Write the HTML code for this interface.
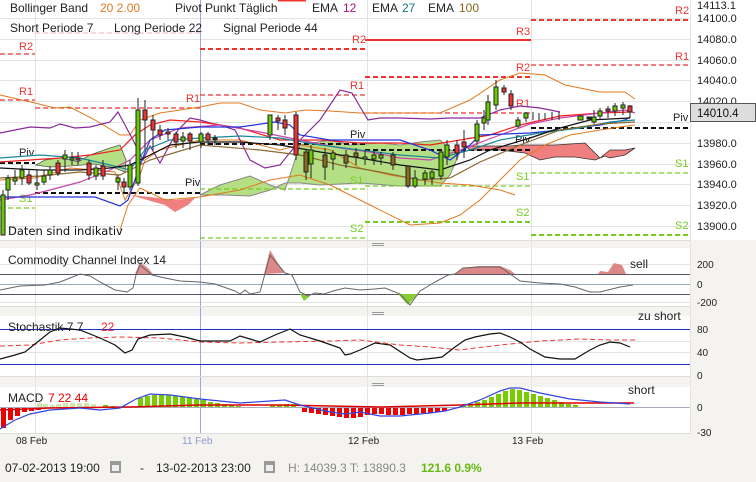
<!DOCTYPE html>
<html><head><meta charset="utf-8"><style>
html,body{margin:0;padding:0;background:#f4f3f0;width:756px;height:482px;overflow:hidden}
svg{display:block;font-family:"Liberation Sans",sans-serif}
</style></head><body>
<svg width="756" height="482" viewBox="0 0 756 482" xmlns="http://www.w3.org/2000/svg">
<rect x="0" y="0" width="756" height="482" fill="#f4f3f0"/>
<rect x="0" y="0" width="690" height="240" fill="#fff"/>
<rect x="0" y="248" width="690" height="58" fill="#fff"/>
<rect x="0" y="316" width="690" height="60" fill="#fff"/>
<rect x="0" y="387" width="690" height="46" fill="#fff"/>
<rect x="690" y="0" width="66" height="240" fill="#fff"/>
<g stroke="#e4e4e4" stroke-width="1">
<line x1="0" y1="18.5" x2="690" y2="18.5"/><line x1="0" y1="39.5" x2="690" y2="39.5"/><line x1="0" y1="60.5" x2="690" y2="60.5"/><line x1="0" y1="80.5" x2="690" y2="80.5"/><line x1="0" y1="101.5" x2="690" y2="101.5"/><line x1="0" y1="122.5" x2="690" y2="122.5"/><line x1="0" y1="143.5" x2="690" y2="143.5"/><line x1="0" y1="164.5" x2="690" y2="164.5"/><line x1="0" y1="184.5" x2="690" y2="184.5"/><line x1="0" y1="205.5" x2="690" y2="205.5"/><line x1="0" y1="226.5" x2="690" y2="226.5"/>
<line x1="35.5" y1="0" x2="35.5" y2="433"/><line x1="367.5" y1="0" x2="367.5" y2="433"/><line x1="531.5" y1="0" x2="531.5" y2="433"/>
<line x1="0" y1="264.5" x2="690" y2="264.5"/><line x1="0" y1="302.5" x2="690" y2="302.5"/>
<line x1="0" y1="341.5" x2="690" y2="341.5"/><line x1="0" y1="352.5" x2="690" y2="352.5"/>
<line x1="690.5" y1="0" x2="690.5" y2="434"/>
</g>
<line x1="200.5" y1="0" x2="200.5" y2="433" stroke="#9aa8dc"/>
<g stroke="#ddd"><line x1="0" y1="240.5" x2="690" y2="240.5"/><line x1="0" y1="306.5" x2="690" y2="306.5"/><line x1="0" y1="376.5" x2="690" y2="376.5"/><line x1="0" y1="433.5" x2="690" y2="433.5"/></g>
<g stroke="#999"><line x1="372" y1="243.5" x2="384" y2="243.5"/><line x1="372" y1="245.5" x2="384" y2="245.5"/><line x1="372" y1="312.5" x2="384" y2="312.5"/><line x1="372" y1="314.5" x2="384" y2="314.5"/><line x1="372" y1="383.5" x2="384" y2="383.5"/><line x1="372" y1="385.5" x2="384" y2="385.5"/></g>

<!-- clouds -->
<path d="M36,165 L45,160 L60,158 L72,160 L78,162 L90,155 L110,148 L120,145 L126,160 L125,172 L115,168 L95,164 L70,166 L50,167 Z" fill="#b5df85" stroke="#555" stroke-width="0.8"/>
<path d="M130,195 L150,197 L175,200 L195,198 L188,205 L175,212 L165,205 Z" fill="#f08080"/>
<path d="M200,195 L220,185 L250,176 L270,185 L285,190 L295,160 L300,145 L330,140 L350,145 L380,143 L400,145 L420,142 L440,140 L450,150 L460,152 L450,175 L440,186 L400,186 L360,183 L320,185 L300,183 L285,183 L270,190 L250,196 L225,195 Z" fill="#b5df85" stroke="#888" stroke-width="1"/>
<path d="M465,146 L510,146 L520,145 L555,145 L585,143 L600,158 L610,150 L625,150 L635,148 L625,155 L610,158 L605,156 L595,160 L575,157 L555,157 L540,160 L525,153 L500,150 L470,150 Z" fill="#f08080" stroke="#333" stroke-width="0.8"/>

<g fill="none" stroke-dasharray="5,3" stroke-width="1.3">
<line x1="0" y1="54" x2="35" y2="54" stroke="#e33"/>
<line x1="35" y1="33" x2="200" y2="33" stroke="#f4c0c0"/>
<line x1="0" y1="100" x2="35" y2="100" stroke="#e33"/>
<line x1="35" y1="108" x2="200" y2="108" stroke="#e33"/>
<line x1="0" y1="163" x2="35" y2="163" stroke="#111" stroke-width="2"/>
<line x1="35" y1="193" x2="200" y2="193" stroke="#111" stroke-width="2"/>
<line x1="0" y1="208" x2="35" y2="208" stroke="#7c2"/>
<line x1="200" y1="49" x2="365" y2="49" stroke="#e33" stroke-width="2"/>
<line x1="200" y1="95" x2="365" y2="95" stroke="#e33"/>
<line x1="200" y1="144" x2="365" y2="144" stroke="#111" stroke-width="2"/>
<line x1="200" y1="189" x2="365" y2="189" stroke="#7c2"/>
<line x1="200" y1="238" x2="365" y2="238" stroke="#7c2"/>
<line x1="365" y1="77" x2="531" y2="77" stroke="#e33" stroke-width="2"/>
<line x1="365" y1="113" x2="531" y2="113" stroke="#e33"/>
<line x1="365" y1="150" x2="531" y2="150" stroke="#111" stroke-width="2"/>
<line x1="365" y1="186" x2="531" y2="186" stroke="#7c2"/>
<line x1="365" y1="222" x2="531" y2="222" stroke="#7c2" stroke-width="2"/>
<line x1="531" y1="20" x2="690" y2="20" stroke="#e33" stroke-width="2"/>
<line x1="531" y1="65" x2="690" y2="65" stroke="#e33"/>
<line x1="531" y1="128" x2="690" y2="128" stroke="#111" stroke-width="2"/>
<line x1="531" y1="173" x2="690" y2="173" stroke="#7c2"/>
<line x1="531" y1="235" x2="690" y2="235" stroke="#7c2" stroke-width="2"/>
</g>
<line x1="365" y1="40" x2="531" y2="40" stroke="#e33" stroke-width="2"/>
<g font-size="11" fill="#e33">
<text x="19" y="50">R2</text><text x="19" y="95">R1</text>
<text x="186" y="102">R1</text>
<text x="352" y="43">R2</text><text x="350" y="89">R1</text>
<text x="516" y="35">R3</text><text x="516" y="71">R2</text><text x="516" y="107">R1</text>
<text x="675" y="14">R2</text><text x="675" y="60">R1</text>
</g>
<g font-size="11" fill="#7c2">
<text x="19" y="202">S1</text><text x="350" y="184">S1</text><text x="350" y="232">S2</text>
<text x="516" y="180">S1</text><text x="516" y="216">S2</text>
<text x="675" y="167">S1</text><text x="675" y="229">S2</text>
</g>
<g font-size="11" fill="#222">
<text x="19" y="156">Piv</text><text x="185" y="186">Piv</text><text x="350" y="138">Piv</text><text x="515" y="143">Piv</text><text x="673" y="121">Piv</text>
</g>

<g fill="none" stroke="#e07a20" stroke-width="1">
<path d="M0,95 L35,103 L55,108 L70,107 L95,120 L120,135 L130,135 L140,120 L160,113 L180,110 L200,107 L220,103 L240,103 L260,110 L285,113 L305,110 L330,111 L360,113 L400,113 L440,113 L470,100 L500,80 L520,73 L545,75 L565,85 L600,92 L625,92 L635,99"/>
<path d="M0,180 L35,178 L70,168 L95,170 L115,172 L125,200 L140,175 L145,160 L160,150 L200,140 L240,140 L280,150 L300,145 L330,150 L360,168 L390,175 L420,180 L440,183 L470,185 L500,190 L515,195"/>
<path d="M120,230 L128,205 L140,188 L165,200 L200,197 L240,190 L270,180 L300,175 L330,185 L370,205 L410,225 L440,223 L460,215 L480,200 L500,180 L520,160 L545,145 L570,135 L600,130 L620,127 L635,125"/>
</g>
<path d="M0,133 L15,130 L30,127 L50,128 L60,124 L75,128 L90,127 L110,122 L118,112 L125,125 L133,140 L143,160 L150,146 L160,163 L168,148 L178,130 L190,118 L200,120 L210,123 L220,125 L235,130 L250,160 L265,168 L280,165 L300,140 L320,120 L340,90 L352,93 L362,110 L368,120 L380,118 L400,118 L430,119 L450,118 L470,118 L480,118 L500,110 L520,106 L540,108 L560,112" fill="none" stroke="#8a2a9a" stroke-width="1.2"/>
<g fill="none" stroke-width="1.2">
<path d="M0,162 L30,160 L60,158 L90,155 L120,150 L135,135 L150,125 L170,120 L200,122 L240,128 L280,140 L320,140 L360,143 L400,143 L430,145 L460,140 L490,135 L520,125 L560,116 L600,113 L630,112" stroke="#e22"/>
<path d="M0,200 L30,195 L50,190 L80,182 L110,170 L130,160 L150,140 L180,128 L220,125 L260,132 L300,140 L340,148 L370,152 L400,158 L430,160 L460,150 L500,135 L530,124 L560,118 L600,113 L625,110 L635,113" stroke="#cc44aa"/>
<path d="M0,197 L50,197 L95,197 L120,206 L128,200 L140,165 L150,140 L165,130 L200,127 L240,127 L275,122 L290,125 L300,135 L330,140 L400,140 L430,150 L450,160 L470,145 L480,135 L530,133 L560,130 L600,125 L625,120 L630,117" stroke="#2233dd"/>
<path d="M0,158 L40,155 L80,158 L110,165 L130,170 L145,150 L170,140 L200,138 L240,136 L280,138 L320,145 L360,150 L400,155 L440,158 L470,150 L500,140 L540,133 L580,128 L610,122 L635,120" stroke="#1a8a9a"/>
<path d="M0,168 L40,170 L80,170 L110,168 L130,165 L150,155 L170,145 L200,142 L240,142 L280,145 L320,152 L360,158 L400,165 L440,170 L470,160 L490,150 L530,138 L560,128 L590,120 L630,118" stroke="#111"/>
<path d="M0,178 L40,176 L80,172 L120,175 L150,160 L200,145 L260,150 L300,155 L340,165 L380,172 L420,180 L450,178 L480,162 L520,145 L560,130 L600,124 L635,122" stroke="#8a6a30"/>
</g>

<g stroke="#222" stroke-width="1">
<line x1="3" y1="190" x2="3" y2="235"/><rect x="1" y="195" width="4" height="40" fill="#6c0"/>
<line x1="8" y1="175" x2="8" y2="200"/><rect x="6" y="178" width="4" height="12" fill="#6c0"/>
<line x1="15" y1="170" x2="15" y2="185"/><rect x="13" y="178" width="4" height="3" fill="#6c0"/>
<line x1="22" y1="165" x2="22" y2="185"/><rect x="20" y="170" width="4" height="8" fill="#6c0"/>
<line x1="29" y1="170" x2="29" y2="185"/><rect x="27" y="175" width="4" height="8" fill="#e33"/>
<line x1="37" y1="170" x2="37" y2="190"/><rect x="35" y="183" width="4" height="2" fill="#6c0"/>
<line x1="44" y1="170" x2="44" y2="185"/><rect x="42" y="176" width="4" height="6" fill="#6c0"/>
<line x1="50" y1="166" x2="50" y2="180"/><rect x="48" y="170" width="4" height="5" fill="#6c0"/>
<line x1="58" y1="160" x2="58" y2="176"/><rect x="56" y="163" width="4" height="10" fill="#e33"/>
<line x1="65" y1="150" x2="65" y2="172"/><rect x="63" y="155" width="4" height="4" fill="#6c0"/>
<line x1="72" y1="152" x2="72" y2="165"/><rect x="70" y="158" width="4" height="2" fill="#6c0"/>
<line x1="78" y1="152" x2="78" y2="165"/><rect x="76" y="158" width="4" height="2" fill="#e33"/>
<line x1="89" y1="160" x2="89" y2="180"/><rect x="87" y="163" width="4" height="12" fill="#e33"/>
<line x1="96" y1="165" x2="96" y2="180"/><rect x="94" y="168" width="4" height="8" fill="#6c0"/>
<line x1="103" y1="160" x2="103" y2="180"/><rect x="101" y="166" width="4" height="10" fill="#e33"/>
<line x1="118" y1="175" x2="118" y2="190"/><rect x="116" y="178" width="4" height="4" fill="#6c0"/>
<line x1="124" y1="178" x2="124" y2="192"/><rect x="122" y="182" width="4" height="5" fill="#e33"/>
<line x1="130" y1="160" x2="130" y2="190"/><rect x="128" y="165" width="4" height="22" fill="#6c0"/>
<line x1="138" y1="98" x2="138" y2="186"/><rect x="136" y="110" width="4" height="73" fill="#6c0"/>
<line x1="145" y1="100" x2="145" y2="150"/><rect x="143" y="110" width="4" height="10" fill="#e33"/>
<line x1="153" y1="115" x2="153" y2="150"/><rect x="151" y="120" width="4" height="10" fill="#e33"/>
<line x1="160" y1="125" x2="160" y2="140"/><rect x="158" y="130" width="4" height="5" fill="#e33"/>
<line x1="168" y1="128" x2="168" y2="140"/><rect x="166" y="132" width="4" height="2" fill="#e33"/>
<line x1="176" y1="132" x2="176" y2="148"/><rect x="174" y="134" width="4" height="8" fill="#e33"/>
<line x1="183" y1="132" x2="183" y2="148"/><rect x="181" y="137" width="4" height="4" fill="#6c0"/>
<line x1="190" y1="132" x2="190" y2="150"/><rect x="188" y="134" width="4" height="7" fill="#e33"/>
<line x1="201" y1="132" x2="201" y2="148"/><rect x="199" y="134" width="4" height="8" fill="#6c0"/>
<line x1="208" y1="132" x2="208" y2="145"/><rect x="206" y="134" width="4" height="6" fill="#e33"/>
<line x1="215" y1="135" x2="215" y2="145"/><rect x="213" y="138" width="4" height="2" fill="#222"/>
<line x1="270" y1="115" x2="270" y2="140"/><rect x="268" y="115" width="4" height="20" fill="#6c0"/>
<line x1="278" y1="115" x2="278" y2="130"/><rect x="276" y="118" width="4" height="3" fill="#e33"/>
<line x1="285" y1="115" x2="285" y2="135"/><rect x="283" y="120" width="4" height="8" fill="#e33"/>
<line x1="296" y1="112" x2="296" y2="160"/><rect x="294" y="115" width="4" height="40" fill="#e33"/>
<line x1="306" y1="150" x2="306" y2="180"/><rect x="304" y="152" width="4" height="20" fill="#8a6a20"/>
<line x1="311" y1="145" x2="311" y2="178"/><rect x="309" y="150" width="4" height="14" fill="#6c0"/>
<line x1="325" y1="148" x2="325" y2="180"/><rect x="323" y="155" width="4" height="12" fill="#8a6a20"/>
<line x1="333" y1="150" x2="333" y2="170"/><rect x="331" y="153" width="4" height="6" fill="#6c0"/>
<line x1="346" y1="150" x2="346" y2="168"/><rect x="344" y="155" width="4" height="8" fill="#8a6a20"/>
<line x1="356" y1="148" x2="356" y2="165"/><rect x="354" y="153" width="4" height="4" fill="#8a6a20"/>
<line x1="365" y1="150" x2="365" y2="165"/><rect x="363" y="157" width="4" height="2" fill="#6c0"/>
<line x1="374" y1="150" x2="374" y2="165"/><rect x="372" y="155" width="4" height="4" fill="#6c0"/>
<line x1="381" y1="152" x2="381" y2="165"/><rect x="379" y="155" width="4" height="3" fill="#6c0"/>
<line x1="393" y1="152" x2="393" y2="170"/><rect x="391" y="155" width="4" height="10" fill="#8a6a20"/>
<line x1="408" y1="165" x2="408" y2="188"/><rect x="406" y="166" width="4" height="20" fill="#8a6a20"/>
<line x1="415" y1="170" x2="415" y2="188"/><rect x="413" y="178" width="4" height="8" fill="#6c0"/>
<line x1="425" y1="170" x2="425" y2="185"/><rect x="423" y="173" width="4" height="6" fill="#6c0"/>
<line x1="432" y1="170" x2="432" y2="185"/><rect x="430" y="172" width="4" height="6" fill="#6c0"/>
<line x1="441" y1="150" x2="441" y2="180"/><rect x="439" y="152" width="4" height="24" fill="#6c0"/>
<line x1="447" y1="140" x2="447" y2="165"/><rect x="445" y="145" width="4" height="12" fill="#6c0"/>
<line x1="457" y1="140" x2="457" y2="160"/><rect x="455" y="145" width="4" height="8" fill="#e33"/>
<line x1="464" y1="130" x2="464" y2="158"/><rect x="462" y="142" width="4" height="5" fill="#e33"/>
<line x1="477" y1="120" x2="477" y2="145"/><rect x="475" y="124" width="4" height="17" fill="#6c0"/>
<line x1="484" y1="110" x2="484" y2="130"/><rect x="482" y="118" width="4" height="5" fill="#6c0"/>
<line x1="488" y1="95" x2="488" y2="125"/><rect x="486" y="102" width="4" height="18" fill="#6c0"/>
<line x1="496" y1="80" x2="496" y2="110"/><rect x="494" y="87" width="4" height="18" fill="#6c0"/>
<line x1="504" y1="85" x2="504" y2="95"/><rect x="502" y="88" width="4" height="4" fill="#e33"/>
<line x1="511" y1="90" x2="511" y2="110"/><rect x="509" y="94" width="4" height="12" fill="#e33"/>
<line x1="518" y1="117" x2="518" y2="128"/><rect x="516" y="120" width="4" height="6" fill="#6c0"/>
<line x1="526" y1="112" x2="526" y2="122"/><rect x="524" y="113" width="4" height="5" fill="#6c0"/>
<line x1="533" y1="112" x2="533" y2="120"/><line x1="539" y1="113" x2="539" y2="120"/><line x1="545" y1="113" x2="545" y2="120"/><line x1="552" y1="112" x2="552" y2="120"/><line x1="559" y1="112" x2="559" y2="120"/>
<rect x="578" y="116" width="5" height="4" fill="#6c0"/>
<rect x="587" y="117" width="4" height="2" fill="#222"/>
<line x1="594" y1="110" x2="594" y2="124"/><rect x="592" y="117" width="4" height="5" fill="#6c0"/>
<line x1="600" y1="108" x2="600" y2="120"/><rect x="598" y="111" width="4" height="5" fill="#6c0"/>
<line x1="608" y1="106" x2="608" y2="118"/><rect x="606" y="109" width="4" height="2" fill="#e33"/>
<line x1="615" y1="103" x2="615" y2="116"/><rect x="613" y="106" width="4" height="5" fill="#6c0"/>
<line x1="623" y1="102" x2="623" y2="115"/><rect x="621" y="105" width="4" height="3" fill="#6c0"/>
<line x1="630" y1="105" x2="630" y2="118"/><rect x="628" y="106" width="4" height="6" fill="#e33"/>
</g>

<g font-size="12" fill="#222">
<text x="10" y="12">Bollinger Band</text><text x="100" y="12" fill="#e07a20">20  2.00</text>
<text x="175" y="12">Pivot Punkt  Täglich</text>
<text x="312" y="12">EMA</text><text x="343" y="12" fill="#aa1177">12</text>
<text x="372" y="12">EMA</text><text x="402" y="12" fill="#117788">27</text>
<text x="428" y="12">EMA</text><text x="459" y="12" fill="#886622">100</text>
<text x="10" y="32">Short Periode  7</text><text x="114" y="32">Long Periode  22</text><text x="223" y="32">Signal Periode  44</text>
</g>
<text x="8" y="235" font-size="11.5" fill="#111" font-family="DejaVu Sans,sans-serif">Daten sind indikativ</text>
<line x1="278" y1="0.5" x2="306" y2="0.5" stroke="#e33" stroke-width="2"/>

<g font-size="11" fill="#222">
<text x="697" y="9">14113.1</text><text x="697" y="22">14100.0</text><text x="697" y="43">14080.0</text><text x="697" y="64">14060.0</text><text x="697" y="84">14040.0</text><text x="697" y="105">14020.0</text><text x="697" y="147">13980.0</text><text x="697" y="168">13960.0</text><text x="697" y="188">13940.0</text><text x="697" y="209">13920.0</text><text x="697" y="230">13900.0</text>
</g>
<rect x="690.5" y="103.5" width="65" height="18" fill="#ddd" stroke="#555"/>
<text x="697" y="117" font-size="11.5" fill="#111">14010.4</text>

<g stroke-width="1"><line x1="0" y1="274.5" x2="690" y2="274.5" stroke="#556"/><line x1="0" y1="284.5" x2="690" y2="284.5" stroke="#9ab"/><line x1="0" y1="294.5" x2="690" y2="294.5" stroke="#556"/></g>
<path d="M135,274 L140,262 L148,268 L153,274 Z" fill="#e09090"/>
<path d="M264,274 L270,250 L284,273 Z" fill="#d88"/>
<path d="M455,274 L463,268 L478,266 L500,266 L510,270 L515,274 Z" fill="#d88"/>
<path d="M598,274 L600,271 L608,272 L614,263 L622,265 L626,274 Z" fill="#d88"/>
<path d="M300,294 L304,301 L310,296 Z M398,294 L408,305 L418,294 Z" fill="#8c3"/>
<path d="M0,290 L20,286 L45,285 L60,282 L70,278 L80,274 L90,276 L100,282 L115,290 L127,292 L133,288 L136,275 L140,265 L152,275 L165,278 L180,281 L200,282 L215,284 L235,291 L240,294 L245,290 L250,294 L260,292 L266,270 L270,255 L285,273 L292,275 L300,292 L308,296 L315,293 L324,294 L333,291 L345,288 L360,290 L375,289 L385,288 L400,294 L410,305 L420,291 L435,282 L448,275 L455,274 L463,268 L480,267 L500,267 L510,274 L520,281 L540,283 L560,284 L575,287 L590,292 L600,292 L620,287 L633,285" fill="none" stroke="#666" stroke-width="1"/>
<g font-size="12" fill="#222"><text x="8" y="264">Commodity Channel Index  14</text><text x="630" y="268">sell</text></g>
<g font-size="10" fill="#222"><text x="697" y="268">200</text><text x="697" y="288">0</text><text x="697" y="306">-200</text></g>

<line x1="0" y1="329.5" x2="690" y2="329.5" stroke="#2233cc"/><line x1="0" y1="364.5" x2="690" y2="364.5" stroke="#2233cc"/>
<path d="M0,346 L30,345 L60,340 L90,338 L120,337 L160,338 L200,342 L240,343 L280,342 L330,341 L360,340 L400,345 L430,347 L460,350 L500,345 L540,341 L580,339 L610,340 L635,340" fill="none" stroke="#e33" stroke-dasharray="5,3"/>
<path d="M0,359 L15,355 L25,352 L40,340 L50,332 L60,328 L80,330 L100,338 L115,345 L125,353 L132,350 L138,339 L150,335 L170,334 L185,337 L200,341 L230,341 L240,336 L250,339 L260,342 L275,335 L290,329 L300,335 L320,341 L340,348 L345,355 L350,354 L360,350 L375,343 L390,345 L410,358 L417,360 L435,358 L442,357 L455,347 L465,340 L475,337 L490,334 L500,333 L510,337 L520,342 L530,349 L545,357 L560,359 L575,359 L590,350 L600,345 L610,342 L620,343 L630,347" fill="none" stroke="#111" stroke-width="1.2"/>
<g font-size="12" fill="#222"><text x="8" y="331">Stochastik  7  7</text><text x="101" y="331" fill="#e22">22</text><text x="638" y="320">zu short</text></g>
<g font-size="10" fill="#222"><text x="697" y="333">80</text><text x="697" y="356">40</text><text x="697" y="379">0</text></g>

<line x1="0" y1="407.5" x2="690" y2="407.5" stroke="#aab"/>
<g fill="#7c0">
<rect x="37" y="403" width="5" height="4" fill="#cde8a8"/><rect x="43" y="404" width="5" height="3" fill="#cde8a8"/><rect x="50" y="405" width="5" height="2" fill="#cde8a8"/><rect x="56" y="404" width="5" height="3" fill="#cde8a8"/><rect x="63" y="403" width="5" height="4" fill="#cde8a8"/><rect x="70" y="403" width="5" height="4" fill="#cde8a8"/><rect x="77" y="403" width="5" height="4" fill="#cde8a8"/><rect x="84" y="403" width="5" height="4" fill="#cde8a8"/><rect x="91" y="404" width="5" height="3" fill="#cde8a8"/>
<rect x="103" y="405" width="5" height="2"/><rect x="110" y="406" width="5" height="1"/>
<rect x="138" y="398" width="5" height="9"/><rect x="145" y="396" width="5" height="11"/><rect x="152" y="395" width="5" height="12"/><rect x="159" y="395" width="5" height="12"/><rect x="166" y="395" width="5" height="12"/><rect x="173" y="396" width="5" height="11"/><rect x="180" y="397" width="5" height="10"/><rect x="187" y="398" width="5" height="9"/><rect x="194" y="399" width="5" height="8"/><rect x="201" y="400" width="5" height="7"/><rect x="208" y="402" width="5" height="5"/><rect x="215" y="403" width="5" height="4"/><rect x="222" y="404" width="5" height="3"/><rect x="229" y="405" width="5" height="2"/><rect x="236" y="406" width="5" height="1"/>
<rect x="270" y="405" width="5" height="2"/><rect x="277" y="405" width="5" height="2"/><rect x="284" y="404" width="5" height="3"/><rect x="291" y="404" width="5" height="3"/>
<rect x="461" y="405" width="5" height="2"/><rect x="468" y="404" width="5" height="3"/><rect x="475" y="402" width="5" height="5"/><rect x="482" y="400" width="5" height="7"/><rect x="489" y="397" width="5" height="10"/><rect x="496" y="394" width="5" height="13"/><rect x="503" y="391" width="5" height="16"/><rect x="510" y="389" width="5" height="18"/><rect x="517" y="390" width="5" height="17"/><rect x="524" y="392" width="5" height="15"/><rect x="531" y="394" width="5" height="13"/><rect x="538" y="396" width="5" height="11"/><rect x="545" y="398" width="5" height="9"/><rect x="552" y="400" width="5" height="7"/><rect x="559" y="402" width="5" height="5"/><rect x="566" y="404" width="5" height="3"/><rect x="573" y="405" width="5" height="2"/>
</g>
<g fill="#e00">
<rect x="1" y="408" width="5" height="20"/><rect x="8" y="408" width="5" height="12"/><rect x="15" y="408" width="5" height="8"/><rect x="22" y="408" width="5" height="4"/><rect x="29" y="408" width="5" height="3"/><rect x="36" y="408" width="5" height="2"/>
<rect x="302" y="408" width="5" height="4"/><rect x="309" y="408" width="5" height="5"/><rect x="316" y="408" width="5" height="6"/><rect x="323" y="408" width="5" height="7"/><rect x="330" y="408" width="5" height="8"/><rect x="337" y="408" width="5" height="9"/><rect x="344" y="408" width="5" height="10"/><rect x="351" y="408" width="5" height="10"/><rect x="358" y="408" width="5" height="9"/><rect x="365" y="408" width="5" height="7"/><rect x="372" y="408" width="5" height="6"/><rect x="379" y="408" width="5" height="6"/><rect x="386" y="408" width="5" height="7"/><rect x="393" y="408" width="5" height="7"/><rect x="400" y="408" width="5" height="7"/><rect x="407" y="408" width="5" height="6"/><rect x="414" y="408" width="5" height="6"/><rect x="421" y="408" width="5" height="5"/><rect x="428" y="408" width="5" height="5"/><rect x="435" y="408" width="5" height="4"/><rect x="442" y="408" width="5" height="3"/>
</g>
<path d="M0,410 L50,408 L130,407 L200,405 L280,405 L380,407 L460,405 L520,403 L580,403 L634,403" fill="none" stroke="#d00" stroke-width="1.5"/>
<path d="M0,429 L15,420 L30,414 L50,410 L80,408 L100,410 L120,408 L136,399 L150,394 L170,395 L200,399 L240,403 L270,401 L285,400 L300,405 L330,412 L345,414 L360,412 L380,416 L400,416 L430,413 L445,411 L460,407 L480,400 L500,391 L510,388 L520,388 L540,393 L570,399 L600,402 L630,404" fill="none" stroke="#3344dd" stroke-width="1.2"/>
<g font-size="12" fill="#222"><text x="8" y="402">MACD</text><text x="48" y="402" fill="#e00">7  22  44</text><text x="628" y="394">short</text></g>
<g font-size="10" fill="#222"><text x="697" y="411">0</text><text x="697" y="436">-30</text></g>

<g font-size="10" fill="#222"><text x="16" y="444">08 Feb</text><text x="182" y="444" fill="#8a9ad0">11 Feb</text><text x="348" y="444">12 Feb</text><text x="512" y="444">13 Feb</text></g>

<g font-size="12">
<text x="5" y="472" fill="#222">07-02-2013 19:00</text>
<rect x="110" y="461" width="11" height="12" fill="#999"/><rect x="112" y="465" width="7" height="6" fill="#eee"/>
<text x="140" y="472" fill="#222">-</text>
<text x="156" y="472" fill="#222">13-02-2013 23:00</text>
<rect x="264" y="461" width="11" height="12" fill="#999"/><rect x="266" y="465" width="7" height="6" fill="#eee"/>
<text x="288" y="472" fill="#888">H: 14039.3  T: 13890.3</text>
<text x="421" y="472" fill="#66bb11" font-weight="bold">121.6  0.9%</text>
</g>
</svg>
</body></html>
